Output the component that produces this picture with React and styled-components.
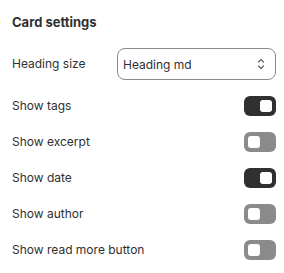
import React from "react";
import styled, { createGlobalStyle } from "styled-components";

const Global = createGlobalStyle`
  html, body { margin: 0; padding: 0; background: #ffffff; }
  body { font-family: Inter, "Noto Sans", sans-serif; }
`;

const Panel = styled.div`
  box-sizing: border-box;
  width: 284px;
  padding: 12px 8px 12px 12px;
  display: flex;
  flex-direction: column;
  gap: 16px;
`;

const Title = styled.h2`
  margin: 0;
  height: 20px;
  line-height: 20px;
  font-size: 13px;
  font-weight: 650;
  color: #303030;
`;

const Row = styled.div`
  display: flex;
  align-items: center;
  justify-content: space-between;
  min-height: 20px;
`;

const Label = styled.span`
  font-size: 12px;
  line-height: 20px;
  color: #303030;
`;

const Select = styled.div`
  box-sizing: border-box;
  width: 159px;
  height: 32px;
  border: 1px solid #8a8a8a;
  border-radius: 8px;
  display: flex;
  align-items: center;
  justify-content: space-between;
  padding: 0 8px 0 5px;
  font-size: 12px;
  color: #303030;
`;

const Track = styled.div`
  box-sizing: border-box;
  width: 32px;
  height: 20px;
  border-radius: 6px;
  background: ${(p) => (p.$on ? "#303030" : "#8a8a8a")};
  display: flex;
  align-items: center;
  justify-content: ${(p) => (p.$on ? "flex-end" : "flex-start")};
  padding: 0 4px;
`;

const Knob = styled.div`
  width: 12px;
  height: 12px;
  border-radius: 3px;
  background: #ffffff;
`;

const Toggle = ({ on }) => (
  <Track $on={on}>
    <Knob />
  </Track>
);

const Chevrons = () => (
  <svg width="12" height="16" viewBox="0 0 12 16" fill="none">
    <path d="M3.5 6 L6 3.5 L8.5 6" stroke="#616161" strokeWidth="1.2" strokeLinecap="round" strokeLinejoin="round" />
    <path d="M3.5 10 L6 12.5 L8.5 10" stroke="#616161" strokeWidth="1.2" strokeLinecap="round" strokeLinejoin="round" />
  </svg>
);

const toggles = [
  ["Show tags", true],
  ["Show excerpt", false],
  ["Show date", true],
  ["Show author", false],
  ["Show read more button", false],
];

export default function App() {
  return (
    <>
      <Global />
      <Panel>
        <Title>Card settings</Title>
        <Row>
          <Label>Heading size</Label>
          <Select>
            <span>Heading md</span>
            <Chevrons />
          </Select>
        </Row>
        {toggles.map(([label, on]) => (
          <Row key={label}>
            <Label>{label}</Label>
            <Toggle on={on} />
          </Row>
        ))}
      </Panel>
    </>
  );
}
